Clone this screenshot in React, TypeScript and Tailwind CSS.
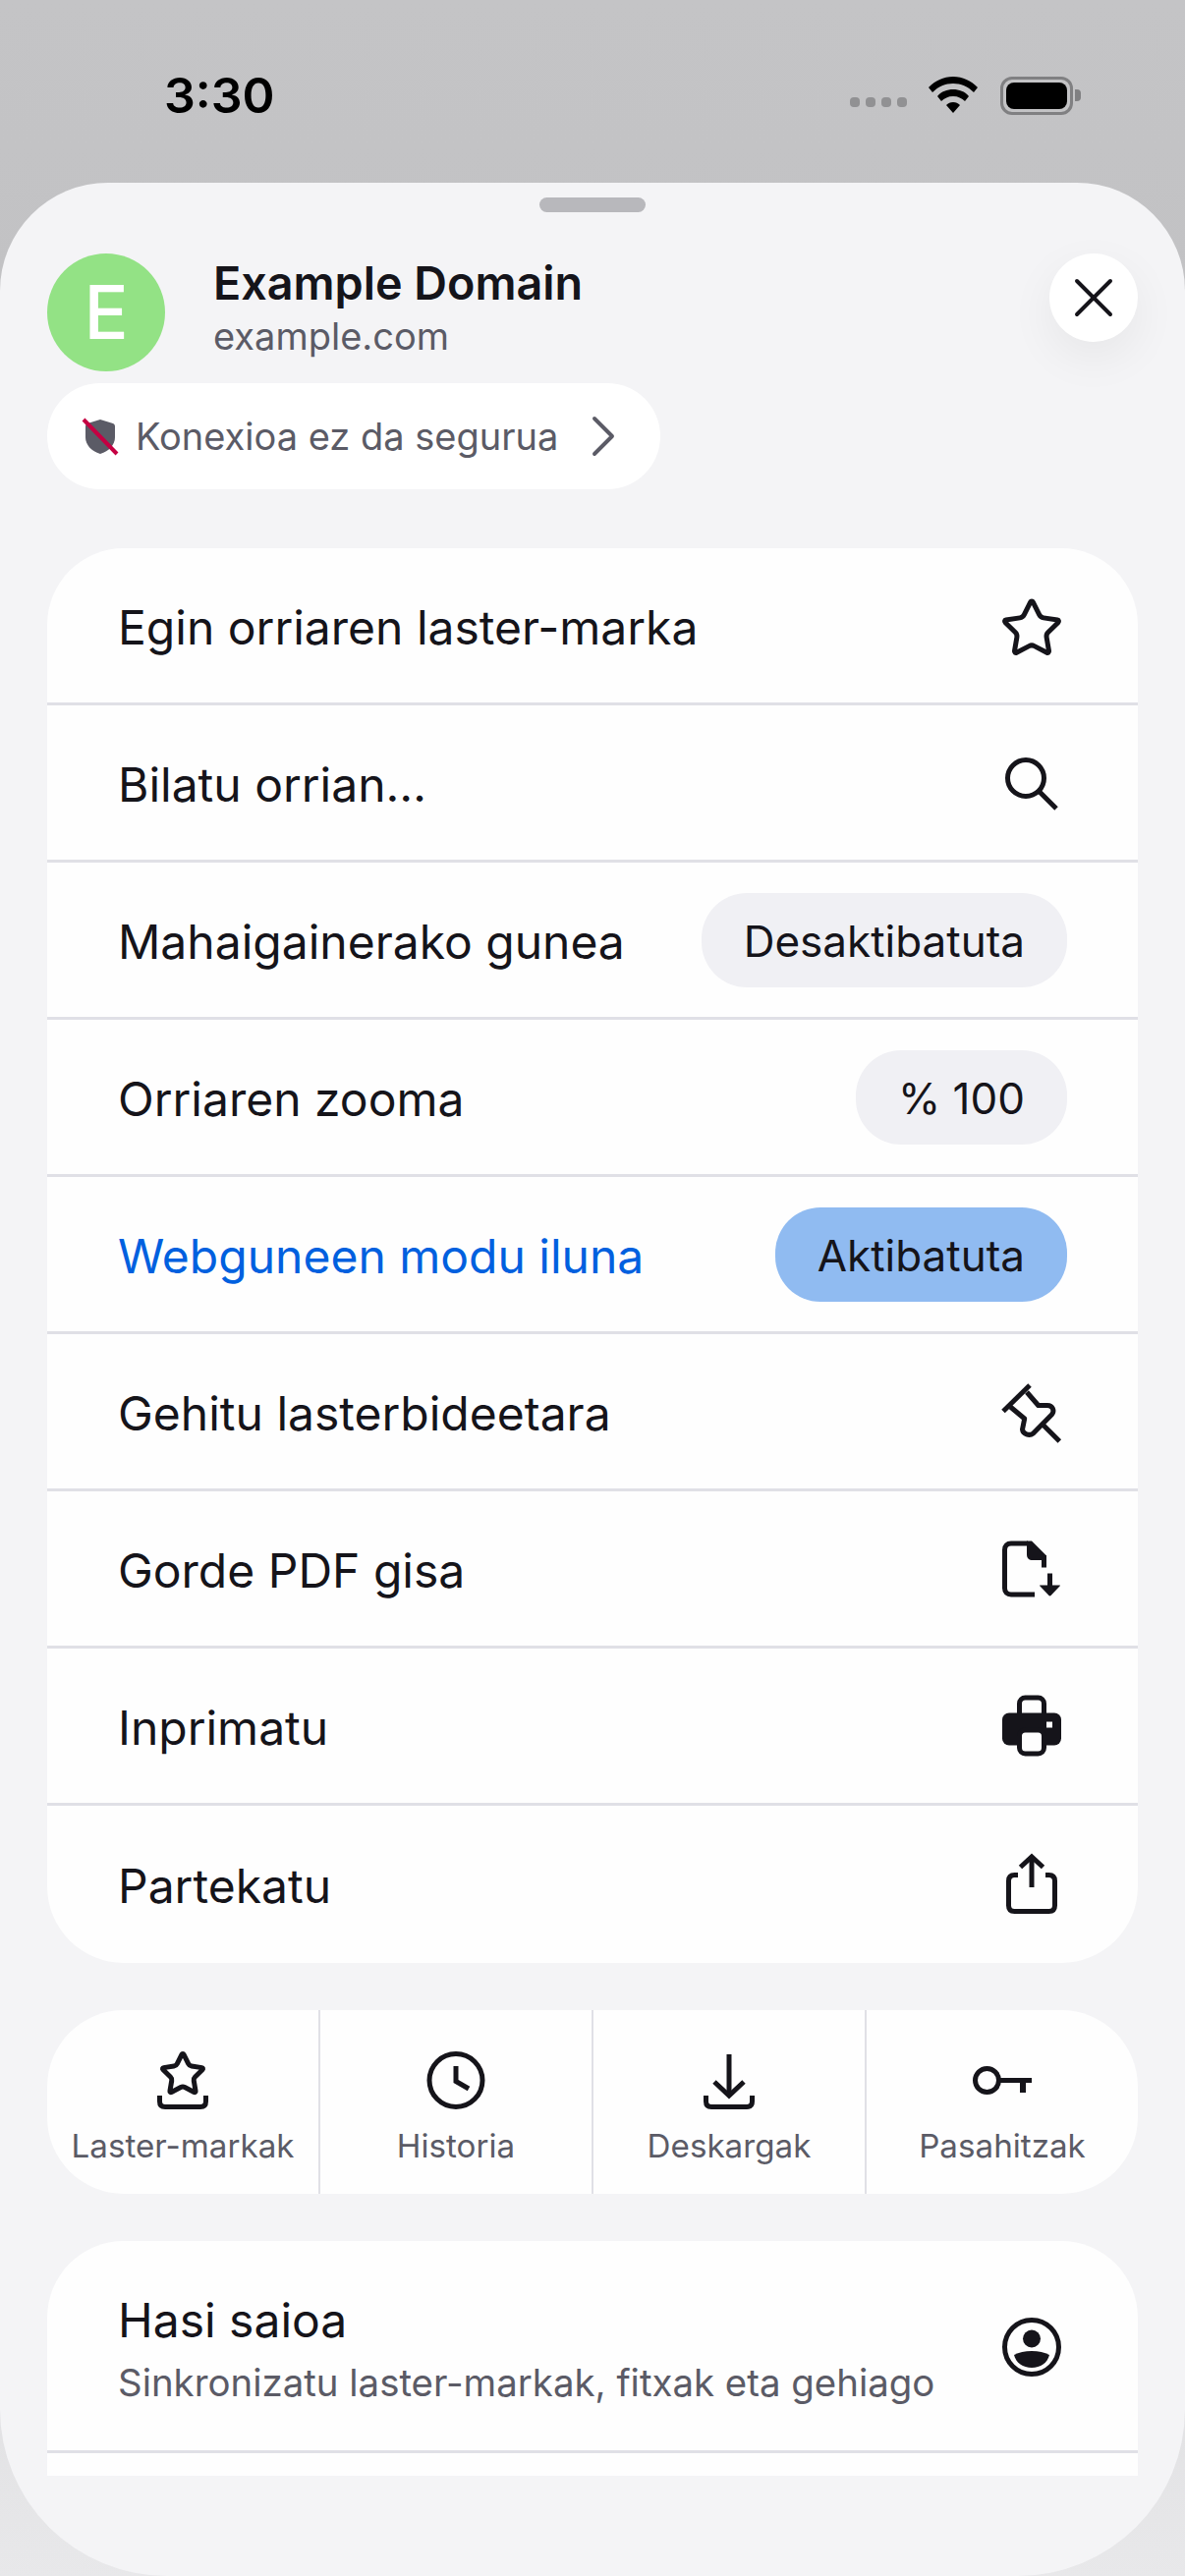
import React from "react";
import { X, ChevronRight } from "lucide-react";

const ink = "#15141a";
const starPath =
  "M11.525 2.295a.53.53 0 0 1 .95 0l2.31 4.679a2.123 2.123 0 0 0 1.595 1.16l5.166.756a.53.53 0 0 1 .294.904l-3.736 3.638a2.123 2.123 0 0 0-.611 1.878l.882 5.14a.53.53 0 0 1-.771.56l-4.618-2.428a2.122 2.122 0 0 0-1.973 0L6.396 21.01a.53.53 0 0 1-.77-.56l.881-5.139a2.122 2.122 0 0 0-.611-1.879L2.16 9.795a.53.53 0 0 1 .294-.906l5.165-.755a2.122 2.122 0 0 0 1.597-1.16z";
const trayPath = "M12.5 51V57C12.5 60.5 14.5 62.5 18 62.5H54C57.5 62.5 59.5 60.5 59.5 57V51";

const IconBox = ({ children }: { children: React.ReactNode }) => (
  <svg width="72" height="72" viewBox="0 0 72 72" fill="none" stroke={ink} strokeWidth="5" className="shrink-0">
    {children}
  </svg>
);

const StarIcon = () => (
  <IconBox>
    <path d={starPath} transform="translate(3 5.5) scale(2.75)" strokeWidth="1.82" />
  </IconBox>
);

const SearchIcon = () => (
  <IconBox>
    <circle cx="30" cy="31" r="18.5" />
    <path d="M44 45L61 62" />
  </IconBox>
);

const PinIcon = () => (
  <IconBox>
    <path d="M7 35.5L34 9" />
    <path d="M31 16L42.7 29.5H52C57.5 29.5 59.5 35 56.5 38.8L37.5 58C33.5 61 27 58.5 26.5 54L28.7 43L14.3 31" strokeLinejoin="round" />
    <path d="M46 47.8L64.3 66" />
  </IconBox>
);

const FileIcon = () => (
  <IconBox>
    <path d="M39 62H15C11 62 8.5 59.5 8.5 55.5V16.5C8.5 12.5 11 10 15 10H32" />
    <path d="M31 7.5H36L51 22.5V27H37C33 27 31 25 31 21Z" fill={ink} stroke="none" />
    <path d="M48.5 22V34.5" />
    <path d="M54.5 40.5V54" />
    <path d="M44.5 52.5H64.5C65 52.5 65 53 64.5 53.5L55.5 63C55 63.5 54 63.5 53.5 63L44.5 53.5C44 53 44 52.5 44.5 52.5Z" fill={ink} stroke="none" />
  </IconBox>
);

const PrinterIcon = () => (
  <IconBox>
    <rect x="23.5" y="7" width="25" height="24" rx="6" fill="#fefefe" />
    <rect x="6" y="22.5" width="60" height="33" rx="7" fill={ink} stroke="none" />
    <rect x="23.5" y="40" width="25" height="24" rx="6" fill="#fefefe" />
    <rect x="51" y="31.5" width="6" height="6" fill="#fefefe" stroke="none" />
  </IconBox>
);

const ShareIcon = () => (
  <IconBox>
    <path d="M22 26.5H18.5C14.5 26.5 12.5 28.5 12.5 32.5V57.5C12.5 61.5 14.5 63.5 18.5 63.5H53.5C57.5 63.5 59.5 61.5 59.5 57.5V32.5C59.5 28.5 57.5 26.5 53.5 26.5H50" />
    <path d="M36 39V8" />
    <path d="M24.5 18.5L36 8L47.5 18.5" />
  </IconBox>
);

const BookmarkTrayIcon = () => (
  <IconBox>
    <path d={starPath} transform="translate(11.4 4.4) scale(2.05)" strokeWidth="2.44" />
    <path d={trayPath} />
  </IconBox>
);

const ClockIcon = () => (
  <IconBox>
    <circle cx="36" cy="35.5" r="27" />
    <path d="M36 21V36.5L49 44" />
  </IconBox>
);

const DownloadIcon = () => (
  <IconBox>
    <path d="M36 9V50" />
    <path d="M21 37L36 51L51 37" />
    <path d={trayPath} />
  </IconBox>
);

const KeyIcon = () => (
  <IconBox>
    <circle cx="20.5" cy="35.5" r="12" />
    <path d="M32 35.5H66" />
    <path d="M57 35.5V48" strokeWidth="6" />
  </IconBox>
);

const AccountIcon = () => (
  <IconBox>
    <circle cx="36" cy="36" r="27.5" />
    <circle cx="36" cy="27.5" r="9" fill={ink} stroke="none" />
    <path d="M18 44C23 41.5 29 40 36 40C43 40 49 41.5 54 44C52 52 45 57 36 57C27 57 20 52 18 44Z" fill={ink} stroke="none" />
  </IconBox>
);

const StatusIcons = () => (
  <div className="flex items-center">
    <div className="flex gap-[6px] mt-[14px] mr-[22px]">
      {[0, 1, 2, 3].map((i) => (
        <span key={i} className="w-[10px] h-[10px] rounded-[4px] bg-[#919193]" />
      ))}
    </div>
    <svg width="50" height="38" viewBox="0 0 50 38" fill="#000" className="mr-[23px]">
      <path d="M25 0C35 0 43 4 50 11L46 16C40 10 33 7 25 7C17 7 10 10 4 16L0 11C7 4 15 0 25 0Z" />
      <path d="M25 13C31 13 37 15 41 20L37 25C34 22 30 20 25 20C20 20 16 22 13 25L9 20C13 15 19 13 25 13Z" />
      <path d="M25 26C28 26 30 27 32 29L25 37L18 29C20 27 22 26 25 26Z" />
    </svg>
    <div className="w-[74px] h-[39px] rounded-[12px] border-[3px] border-[#808082] p-[3px]">
      <div className="w-full h-full rounded-[8px] bg-black" />
    </div>
    <div className="w-[6px] h-[12px] ml-[2px] rounded-r-[4px] bg-[#808082]" />
  </div>
);

const Row = ({ label, right, blue }: { label: string; right: React.ReactNode; blue?: boolean }) => (
  <div className="h-[160px] flex items-center justify-between pl-[72px] pr-[72px] border-b-[3px] border-[#e0e0e6] last:border-b-0">
    <span className={`mt-[4px] ${blue ? "text-[#0060df]" : "text-[#15141a]"}`}>{label}</span>
    {right}
  </div>
);

const Chip = ({ text, active }: { text: string; active?: boolean }) => (
  <span className={`h-[96px] px-[43px] pt-[2px] flex items-center rounded-[46px] text-[44px] text-[#15141a] ${active ? "bg-[#90bbf1]" : "bg-[#f0f0f4]"}`}>
    {text}
  </span>
);

const QuickAction = ({ icon, label }: { icon: React.ReactNode; label: string }) => (
  <div className="flex-1 flex flex-col items-center pt-[36px] border-r-[2px] border-[#e0e0e6] last:border-r-0">
    {icon}
    <span className="mt-[10px] text-[33.2px] leading-[40px] text-[#5b5b66]">{label}</span>
  </div>
);

export default function App() {
  return (
    <div className="w-[1206px] h-[2622px] flex flex-col overflow-hidden bg-gradient-to-b from-[#c4c4c6] via-[#bbbbbd] to-[#e8e8ea] font-['Inter',sans-serif]">
      {/* Status bar */}
      <div className="h-[186px] shrink-0 flex justify-between pl-[167px] pr-[106px] pt-[66px]">
        <span className="text-[50px] leading-[62px] font-semibold text-black">3:30</span>
        <div className="h-[62px] flex items-center"><StatusIcons /></div>
      </div>

      {/* Sheet */}
      <div className="flex-1 flex flex-col px-[48px] pt-[15px] bg-[#f4f4f6] rounded-t-[110px] rounded-b-[170px]">
        <div className="w-[108px] h-[15px] self-center rounded-full bg-[#b8b8bc]" />

        <div className="mt-[42px] flex justify-between">
          <div className="flex">
            <div className="w-[120px] h-[120px] rounded-full bg-[#93e285] flex items-center justify-center text-[75px] font-medium text-white">
              E
            </div>
            <div className="ml-[49px] pt-[2px]">
              <div className="text-[46.7px] leading-[56px] font-semibold text-[#15141a]">Example Domain</div>
              <div className="text-[38px] leading-[52px] text-[#5b5b66]">example.com</div>
            </div>
          </div>
          <div className="w-[90px] h-[90px] rounded-full bg-white flex items-center justify-center shadow-[0_16px_48px_rgba(0,0,0,0.06)]">
            <X size={68} strokeWidth={1.4} color={ink} />
          </div>
        </div>

        <div className="mt-[12px] w-[624px] h-[108px] rounded-[54px] bg-white flex items-center pl-[34px] text-[38px] text-[#5b5b66]">
          <svg width="40" height="40" viewBox="0 0 40 40" className="shrink-0">
            <path d="M20 3L33 7C35 8 35 9 35 11V21C35 29 29 35 20 38C11 35 5 29 5 21V11C5 9 5 8 7 7Z" fill="#5b5b66" />
            <path d="M3 3L37 38" stroke="#c50042" strokeWidth="4" />
          </svg>
          <span className="ml-[16px]">Konexioa ez da segurua</span>
          <ChevronRight size={72} strokeWidth={1.3} color="#5b5b66" className="ml-[10px] shrink-0" />
        </div>

        {/* Page actions */}
        <div className="mt-[60px] rounded-[78px] bg-[#fefefe] text-[48px]">
          <Row label="Egin orriaren laster-marka" right={<StarIcon />} />
          <Row label="Bilatu orrian…" right={<SearchIcon />} />
          <Row label="Mahaigainerako gunea" right={<Chip text="Desaktibatuta" />} />
          <Row label="Orriaren zooma" right={<Chip text="% 100" />} />
          <Row label="Webguneen modu iluna" blue right={<Chip text="Aktibatuta" active />} />
          <Row label="Gehitu lasterbideetara" right={<PinIcon />} />
          <Row label="Gorde PDF gisa" right={<FileIcon />} />
          <Row label="Inprimatu" right={<PrinterIcon />} />
          <Row label="Partekatu" right={<ShareIcon />} />
        </div>

        {/* Library shortcuts */}
        <div className="mt-[48px] h-[187px] flex rounded-[78px] bg-[#fefefe] overflow-hidden">
          <QuickAction icon={<BookmarkTrayIcon />} label="Laster-markak" />
          <QuickAction icon={<ClockIcon />} label="Historia" />
          <QuickAction icon={<DownloadIcon />} label="Deskargak" />
          <QuickAction icon={<KeyIcon />} label="Pasahitzak" />
        </div>

        {/* Account */}
        <div className="mt-[48px] h-[239px] overflow-hidden rounded-t-[78px] bg-[#fefefe]">
          <div className="h-[216px] flex items-center justify-between pl-[72px] pr-[72px] border-b-[3px] border-[#e0e0e6]">
            <div className="pt-[7px]">
              <div className="text-[48px] leading-[60px] text-[#15141a]">Hasi saioa</div>
              <div className="mt-[8px] text-[38.4px] leading-[50px] text-[#5b5b66]">Sinkronizatu laster-markak, fitxak eta gehiago</div>
            </div>
            <div className="mt-[2px]"><AccountIcon /></div>
          </div>
        </div>
      </div>
    </div>
  );
}
